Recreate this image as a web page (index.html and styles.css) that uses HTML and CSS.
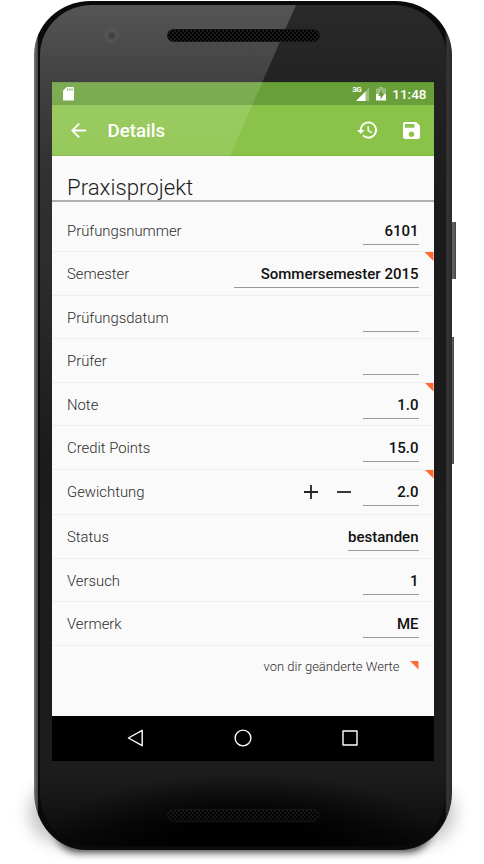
FILE: index.html
```html
<!DOCTYPE html>
<html lang="de">
<head>
<meta charset="utf-8">
<title>Details</title>
<link rel="stylesheet" href="styles.css">
</head>
<body>
<div class="stage">
  <div class="shadow soft"></div>
  <div class="shadow"></div>
  <div class="key key-power"></div>
  <div class="key key-volume"></div>
  <div class="phone">
    <div class="face">
      <header class="forehead">
        <span class="camera"></span>
        <span class="grille"></span>
      </header>
      <main class="screen">
        <div class="status">
          <svg class="sd" viewBox="0 0 11 14"><path fill="#fff" fill-rule="evenodd" d="M3.8 0H9.6Q11 0 11 1.4V12.4Q11 13.6 9.8 13.6H1.2Q0 13.6 0 12.4V3.8ZM4 1.6V3.6H5.2V1.6ZM6.3 1.6V3.6H7.5V1.6ZM8.5 1.6V3.6H9.7V1.6Z"/></svg>
          <span class="net">3G</span>
          <svg class="signal" viewBox="0 0 13 13"><path fill="#fff" opacity=".35" d="M13 0V13H0Z"/><path fill="#fff" d="M9.5 3.5V13H0Z"/></svg>
          <svg class="battery" viewBox="0 0 10 14"><path fill="#fff" opacity=".35" d="M3 0H7V1.5H10V7H0V1.5H3Z"/><path fill="#fff" d="M0 7H10V13.5H0Z"/><path fill="#659b37" d="M6 2.5L2 8.7H4.6V12.5L8.4 6.5H6Z"/></svg>
          <span class="clock">11:48</span>
        </div>
        <div class="appbar">
          <svg class="back" viewBox="4 4 16 16"><path fill="#fff" d="M20 11H7.83l5.59-5.59L12 4l-8 8 8 8 1.41-1.41L7.83 13H20v-2z"/></svg>
          <h1>Details</h1>
          <svg class="history" viewBox="1 3 21 18"><path fill="#fff" d="M13 3c-4.97 0-9 4.03-9 9H1l3.89 3.89.07.14L9 12H6c0-3.87 3.13-7 7-7s7 3.13 7 7-3.13 7-7 7c-1.93 0-3.68-.79-4.94-2.06l-1.42 1.42C8.27 19.99 10.51 21 13 21c4.97 0 9-4.03 9-9s-4.03-9-9-9zm-1 5v5l4.28 2.54.72-1.21-3.5-2.08V8H12z"/></svg>
          <svg class="save" viewBox="3 3 18 18"><path fill="#fff" d="M17 3H5c-1.11 0-2 .9-2 2v14c0 1.1.89 2 2 2h14c1.1 0 2-.9 2-2V7l-4-4zm-5 16c-1.66 0-3-1.34-3-3s1.34-3 3-3 3 1.34 3 3-1.34 3-3 3zm3-10H5V5h10v4z"/></svg>
        </div>
        <div class="content">
          <h2>Praxisprojekt</h2>
          <div class="row first"><span>Prüfungsnummer</span><b>6101</b></div>
          <div class="row changed"><span>Semester</span><b class="wide">Sommersemester 2015</b></div>
          <div class="row"><span>Prüfungsdatum</span><b></b></div>
          <div class="row"><span>Prüfer</span><b></b></div>
          <div class="row changed"><span>Note</span><b>1.0</b></div>
          <div class="row"><span>Credit Points</span><b>15.0</b></div>
          <div class="row changed weight"><span>Gewichtung</span>
            <svg class="step" viewBox="0 0 14 14"><path stroke="#222" stroke-width="1.8" d="M0 7H14M7 0V14"/></svg>
            <svg class="step" viewBox="0 0 14 14"><path stroke="#222" stroke-width="1.8" d="M0 7H14"/></svg>
            <b>2.0</b></div>
          <div class="row"><span>Status</span><b>bestanden</b></div>
          <div class="row"><span>Versuch</span><b>1</b></div>
          <div class="row"><span>Vermerk</span><b>ME</b></div>
          <p class="legend">von dir geänderte Werte<i></i></p>
        </div>
        <nav class="nav">
          <svg viewBox="0 0 18 18"><path d="M16.2 1.3V16.7L2.4 9Z"/></svg>
          <svg viewBox="0 0 18 18"><circle cx="9" cy="9" r="7.9"/></svg>
          <svg viewBox="0 0 18 18"><rect x="2" y="2" width="14" height="14"/></svg>
        </nav>
      </main>
      <footer class="chin"><span class="grille dark"></span></footer>
      <div class="glare"></div>
    </div>
  </div>
</div>
</body>
</html>
```
FILE: styles.css
```css
* { box-sizing: border-box; }
body { margin: 0; background: #fff; font-family: Roboto, sans-serif; }
.stage { position: relative; width: 484px; height: 864px; overflow: hidden; padding: 1px 0 0 34px; }
svg { display: block; flex: none; }

.shadow { position: absolute; left: 56px; top: 808px; width: 374px; height: 44px; border-radius: 30px; background: #000; opacity: .8; filter: blur(4px); }
.shadow.soft { left: 30px; top: 784px; width: 424px; height: 58px; opacity: .25; filter: blur(9px); }
.key { position: absolute; background: linear-gradient(90deg, #333, #666 60%, #444); }
.key-power { left: 449px; top: 222px; width: 6.5px; height: 57px; }
.key-volume { left: 449px; top: 337px; width: 5px; height: 127px; }

.phone {
  position: relative; width: 417.5px; height: 849px; padding: 4px 6px 4px;
  border-radius: 57px 57px 52px 52px / 54px 54px 58px 58px;
  background: linear-gradient(90deg, #777 0, #484848 3.5px, #0a0a0a 4.5px, #0a0a0a 411px, #383637 413px, #2c2829 418px);
}
.face {
  position: relative; height: 841px; overflow: hidden; display: flex; flex-direction: column;
  padding: 0 12px; border-radius: 52px 52px 47px 47px / 50px 50px 54px 54px;
  background:
    radial-gradient(ellipse 200px 72px at 50% 100%, #000 35%, rgba(0,0,0,0) 100%),
    linear-gradient(#2a2a2a, #222 80px, #1b1b1c 200px, #1c1c1d 770px, #121212 810px, #080808);
}
/* The reflection is cut diagonally and runs on down the left bezel. */
.glare {
  position: absolute; left: 0; top: 0; width: 262px; height: 450px; pointer-events: none;
  clip-path: polygon(0 0, 256px 0, 190px 151px, 12px 151px, 12px 450px, 0 450px);
  background: linear-gradient(#ffffff34 0, #ffffff24 75px, #ffffff18 151px, #ffffff14 260px, #fff0 450px);
}
.screen { width: 381.5px; height: 679px; flex: none; display: flex; flex-direction: column; }
.forehead { height: 77px; flex: none; position: relative; }
.camera { position: absolute; left: 52px; top: 23px; width: 15px; height: 15px; border-radius: 50%; background: radial-gradient(circle, #17151c 0 2px, #2c2930 4px, #302f33 6px, #2b2b2b 8px); }
.grille {
  position: absolute; left: 115px; top: 24px; width: 153px; height: 13px; border-radius: 7px;
  border: 1px solid #161616;
  background: radial-gradient(circle at 1px 1px, #000 .8px, transparent 1.1px) 0 0 / 4px 4px,
    radial-gradient(circle at 3px 3px, #000 .8px, transparent 1.1px) 0 0 / 4px 4px, #1b1b1b;
  z-index: 1;
}
.chin { position: relative; flex: 1; }
.grille.dark { top: 48px; opacity: .8; border-color: #1a1a1a; }

.status { height: 23px; flex: none; display: flex; align-items: center; background: #689f38; color: #fff; padding: 0 7px 0 11px; border-top: 1px solid #5e9332; }
.sd { width: 11px; height: 14px; }
.net { margin-left: auto; font-size: 8px; font-weight: 700; line-height: 8px; align-self: flex-start; padding-top: 3px; margin-right: -5px; letter-spacing: -.5px; }
.signal { width: 13px; height: 13px; }
.battery { width: 10px; height: 14px; margin: 0 6px 0 7px; }
.clock { font-size: 13.5px; font-weight: 500; line-height: 22px; }
.appbar { height: 51px; flex: none; display: flex; align-items: center; background: #8bc34a; color: #fff; padding: 0 14px 0 18.5px; border-bottom: 1px solid #7eb53f; }
.back { width: 15px; height: 15px; }
.history { width: 20px; height: 18px; margin-right: 26px; }
.save { width: 17px; height: 17px; }
h1 { flex: 1; margin: 2px 0 0 22px; font-size: 18.7px; font-weight: 500; line-height: 24px; }

.content { flex: 1; background: #fafafa; color: #2c2c2c; }
h2 { margin: 0; height: 46px; padding: 17px 15px 0; border-bottom: 2px solid #b0b0b0; color: #1c1c1c; font-size: 22.2px; font-weight: 300; line-height: 28px; }
.row { position: relative; height: 43.5px; display: flex; align-items: flex-start; padding: 11px 15px 0; border-bottom: 1px solid #eee; font-size: 14.85px; line-height: 23px; font-weight: 300; }
.row span { flex: 1; }
.row.first { height: 50px; padding-top: 17px; line-height: 25px; }
.row.weight { height: 45.5px; }
.row b { min-width: 56px; height: 25px; text-align: right; font-size: 15px; font-weight: 500; color: #111; border-bottom: 1px solid #999; white-space: nowrap; }
.row.first b { height: 26px; }
.row .wide { width: 185px; }
.step { width: 14px; height: 14px; margin: 4.5px 19.5px 0 0; }
.step + .step { margin-right: 11.5px; }
.row.changed::after { content: ""; position: absolute; right: 0; top: 0; width: 9px; height: 9px; background: #ff6a33; clip-path: polygon(0 0, 100% 0, 100% 100%); }
.legend { margin: 0; padding: 11px 15px 0; display: flex; justify-content: flex-end; align-items: center; font-size: 13px; font-weight: 300; line-height: 20px; }
.legend i { width: 9px; height: 9px; margin: -3px 0 0 10px; background: #ff6a33; clip-path: polygon(0 0, 100% 0, 100% 100%); }

.nav { height: 45px; flex: none; background: #000; display: flex; align-items: center; justify-content: center; gap: 89.5px; padding-bottom: 1px; }
.nav svg { width: 18px; height: 18px; fill: none; stroke: #fff; stroke-width: 1.4; stroke-linejoin: round; }
```
